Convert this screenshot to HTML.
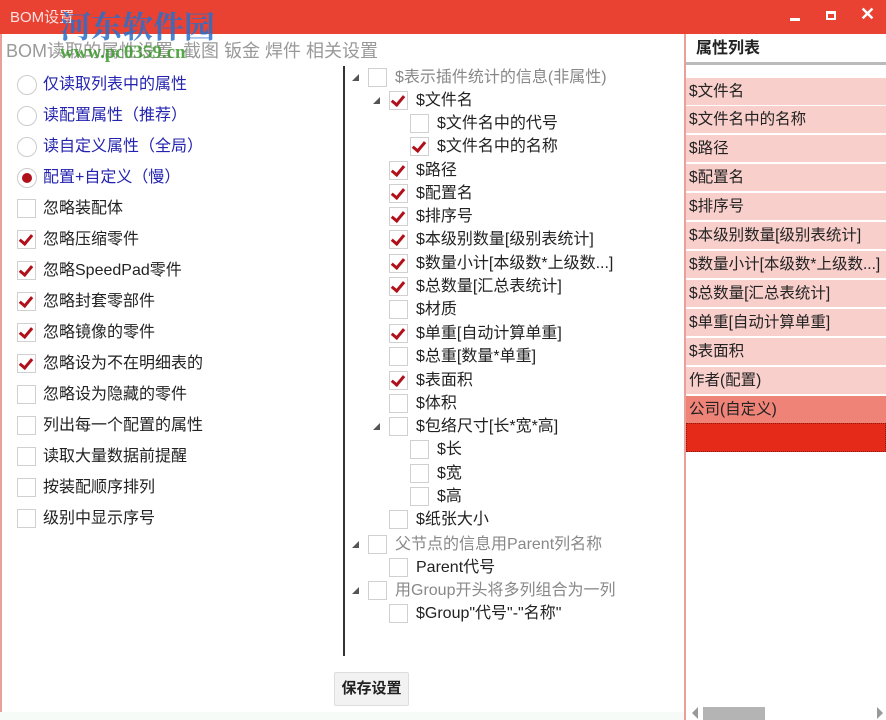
<!DOCTYPE html>
<html><head><meta charset="utf-8"><style>
*{margin:0;padding:0;box-sizing:border-box}
body{width:886px;height:720px;overflow:hidden;background:#fff;position:relative;font-family:"Liberation Sans","Microsoft YaHei","Noto Sans CJK SC",sans-serif;}
.a{position:absolute;white-space:nowrap}
.t{font-size:16px;line-height:20px;color:#222}
.cb{position:absolute;width:19px;height:19px;border:1px solid #d0d0d0;background:#fff}
.cb.c::after{content:"";position:absolute;left:4px;top:1px;width:5px;height:10px;border:solid #b0101a;border-width:0 3px 3px 0;transform:rotate(40deg)}
.rb{position:absolute;width:20px;height:20px;border:1px solid #ccc;border-radius:50%;background:#fff}
.rb.c::after{content:"";position:absolute;left:4px;top:4px;width:10px;height:10px;border-radius:50%;background:#b0101a}
.tri{position:absolute;width:0;height:0;border-left:7px solid transparent;border-bottom:7px solid #555}
.row{position:absolute;left:686px;width:200px;height:28px;background:#f8cfcb;border-top:1px solid #fff;font-size:15.5px;line-height:27px;padding-left:3px;color:#222;overflow:hidden}
</style></head><body>
<div class="a" style="left:0;top:0;width:886px;height:34px;background:#e94233"></div>
<div class="a" style="left:10px;top:6px;color:#fff;font-size:15px;opacity:.85">BOM设置</div>
<div class="a" style="left:60px;top:2px;color:#2a6fc9;font-size:31px;font-weight:bold;font-family:'Noto Serif CJK SC',serif;opacity:.85">河东软件园</div>
<div class="a" style="left:790px;top:18px;width:10px;height:3px;background:#fff"></div>
<div class="a" style="left:826px;top:11px;width:10px;height:9px;border:2px solid #fff;border-top-width:3px"></div>
<div class="a" style="left:860px;top:4px;color:#fff;font-size:18px;font-weight:bold">✕</div>
<div class="a" style="left:0;top:34px;width:2px;height:686px;background:#e9a09a"></div>
<div class="a" style="left:6px;top:37px;font-size:18px;color:#999">BOM读取的属性设置&nbsp; 截图 钣金 焊件 相关设置</div>
<div class="a" style="left:60px;top:42px;font-size:19px;color:#3a9a2a;font-weight:bold;font-family:'Liberation Serif',serif;opacity:.85">www.pc0359.cn</div>

<div class="rb" style="left:17px;top:75px"></div><div class="a t" style="left:43px;top:75px;color:#2323b0">仅读取列表中的属性</div>
<div class="rb" style="left:17px;top:106px"></div><div class="a t" style="left:43px;top:106px;color:#2323b0">读配置属性（推荐）</div>
<div class="rb" style="left:17px;top:137px"></div><div class="a t" style="left:43px;top:137px;color:#2323b0">读自定义属性（全局）</div>
<div class="rb c" style="left:17px;top:168px"></div><div class="a t" style="left:43px;top:168px;color:#2323b0">配置+自定义（慢）</div>
<div class="cb" style="left:17px;top:199px"></div><div class="a t" style="left:43px;top:199px">忽略装配体</div>
<div class="cb c" style="left:17px;top:230px"></div><div class="a t" style="left:43px;top:230px">忽略压缩零件</div>
<div class="cb c" style="left:17px;top:261px"></div><div class="a t" style="left:43px;top:261px">忽略SpeedPad零件</div>
<div class="cb c" style="left:17px;top:292px"></div><div class="a t" style="left:43px;top:292px">忽略封套零部件</div>
<div class="cb c" style="left:17px;top:323px"></div><div class="a t" style="left:43px;top:323px">忽略镜像的零件</div>
<div class="cb c" style="left:17px;top:354px"></div><div class="a t" style="left:43px;top:354px">忽略设为不在明细表的</div>
<div class="cb" style="left:17px;top:385px"></div><div class="a t" style="left:43px;top:385px">忽略设为隐藏的零件</div>
<div class="cb" style="left:17px;top:416px"></div><div class="a t" style="left:43px;top:416px">列出每一个配置的属性</div>
<div class="cb" style="left:17px;top:447px"></div><div class="a t" style="left:43px;top:447px">读取大量数据前提醒</div>
<div class="cb" style="left:17px;top:478px"></div><div class="a t" style="left:43px;top:478px">按装配顺序排列</div>
<div class="cb" style="left:17px;top:509px"></div><div class="a t" style="left:43px;top:509px">级别中显示序号</div>

<div class="a" style="left:343px;top:66px;width:2px;height:590px;background:#333"></div>

<div class="tri" style="left:352px;top:74px"></div><div class="cb" style="left:368px;top:68px"></div><div class="a t" style="left:395px;top:68px;color:#888">$表示插件统计的信息(非属性)</div>
<div class="tri" style="left:373px;top:97px"></div><div class="cb c" style="left:389px;top:91px"></div><div class="a t" style="left:416px;top:91px">$文件名</div>
<div class="cb" style="left:410px;top:114px"></div><div class="a t" style="left:437px;top:114px">$文件名中的代号</div>
<div class="cb c" style="left:410px;top:137px"></div><div class="a t" style="left:437px;top:137px">$文件名中的名称</div>
<div class="cb c" style="left:389px;top:161px"></div><div class="a t" style="left:416px;top:161px">$路径</div>
<div class="cb c" style="left:389px;top:184px"></div><div class="a t" style="left:416px;top:184px">$配置名</div>
<div class="cb c" style="left:389px;top:207px"></div><div class="a t" style="left:416px;top:207px">$排序号</div>
<div class="cb c" style="left:389px;top:230px"></div><div class="a t" style="left:416px;top:230px">$本级别数量[级别表统计]</div>
<div class="cb c" style="left:389px;top:254px"></div><div class="a t" style="left:416px;top:254px">$数量小计[本级数*上级数...]</div>
<div class="cb c" style="left:389px;top:277px"></div><div class="a t" style="left:416px;top:277px">$总数量[汇总表统计]</div>
<div class="cb" style="left:389px;top:300px"></div><div class="a t" style="left:416px;top:300px">$材质</div>
<div class="cb c" style="left:389px;top:324px"></div><div class="a t" style="left:416px;top:324px">$单重[自动计算单重]</div>
<div class="cb" style="left:389px;top:347px"></div><div class="a t" style="left:416px;top:347px">$总重[数量*单重]</div>
<div class="cb c" style="left:389px;top:371px"></div><div class="a t" style="left:416px;top:371px">$表面积</div>
<div class="cb" style="left:389px;top:394px"></div><div class="a t" style="left:416px;top:394px">$体积</div>
<div class="tri" style="left:373px;top:423px"></div><div class="cb" style="left:389px;top:417px"></div><div class="a t" style="left:416px;top:417px">$包络尺寸[长*宽*高]</div>
<div class="cb" style="left:410px;top:440px"></div><div class="a t" style="left:437px;top:440px">$长</div>
<div class="cb" style="left:410px;top:464px"></div><div class="a t" style="left:437px;top:464px">$宽</div>
<div class="cb" style="left:410px;top:487px"></div><div class="a t" style="left:437px;top:487px">$高</div>
<div class="cb" style="left:389px;top:510px"></div><div class="a t" style="left:416px;top:510px">$纸张大小</div>
<div class="tri" style="left:352px;top:541px"></div><div class="cb" style="left:368px;top:535px"></div><div class="a t" style="left:395px;top:535px;color:#888">父节点的信息用Parent列名称</div>
<div class="cb" style="left:389px;top:558px"></div><div class="a t" style="left:416px;top:558px">Parent代号</div>
<div class="tri" style="left:352px;top:587px"></div><div class="cb" style="left:368px;top:581px"></div><div class="a t" style="left:395px;top:581px;color:#888">用Group开头将多列组合为一列</div>
<div class="cb" style="left:389px;top:604px"></div><div class="a t" style="left:416px;top:604px">$Group"代号"-"名称"</div>

<div class="a" style="left:334px;top:672px;width:75px;height:34px;border:1px solid #ddd;border-radius:2px;background:#f2f2f2;font-size:15px;font-weight:bold;line-height:32px;text-align:center;color:#222">保存设置</div>
<div class="a" style="left:0;top:712px;width:684px;height:8px;background:#f6fbf8"></div>

<div class="a" style="left:684px;top:34px;width:2px;height:686px;background:#e9a09a"></div>
<div class="a" style="left:696px;top:38px;font-size:16px;font-weight:bold;line-height:22px;color:#222">属性列表</div>
<div class="a" style="left:686px;top:62px;width:200px;height:3px;background:#bbb"></div>
<div class="row" style="top:77px">$文件名</div>
<div class="row" style="top:105px">$文件名中的名称</div>
<div class="row" style="top:134px">$路径</div>
<div class="row" style="top:163px">$配置名</div>
<div class="row" style="top:192px">$排序号</div>
<div class="row" style="top:221px">$本级别数量[级别表统计]</div>
<div class="row" style="top:250px">$数量小计[本级数*上级数...]</div>
<div class="row" style="top:279px">$总数量[汇总表统计]</div>
<div class="row" style="top:308px">$单重[自动计算单重]</div>
<div class="row" style="top:337px">$表面积</div>
<div class="row" style="top:366px">作者(配置)</div>
<div class="row" style="top:395px;background:#ef8378">公司(自定义)</div>
<div class="row" style="top:423px;height:29px;background:#e52a1a;border:1px dotted #8a1a10"></div>
<div class="a" style="left:692px;top:707px;width:0;height:0;border-top:6px solid transparent;border-bottom:6px solid transparent;border-right:6px solid #999"></div>
<div class="a" style="left:703px;top:707px;width:62px;height:13px;background:#b4b4b4"></div>
<div class="a" style="left:877px;top:707px;width:0;height:0;border-top:6px solid transparent;border-bottom:6px solid transparent;border-left:6px solid #999"></div>
</body></html>
